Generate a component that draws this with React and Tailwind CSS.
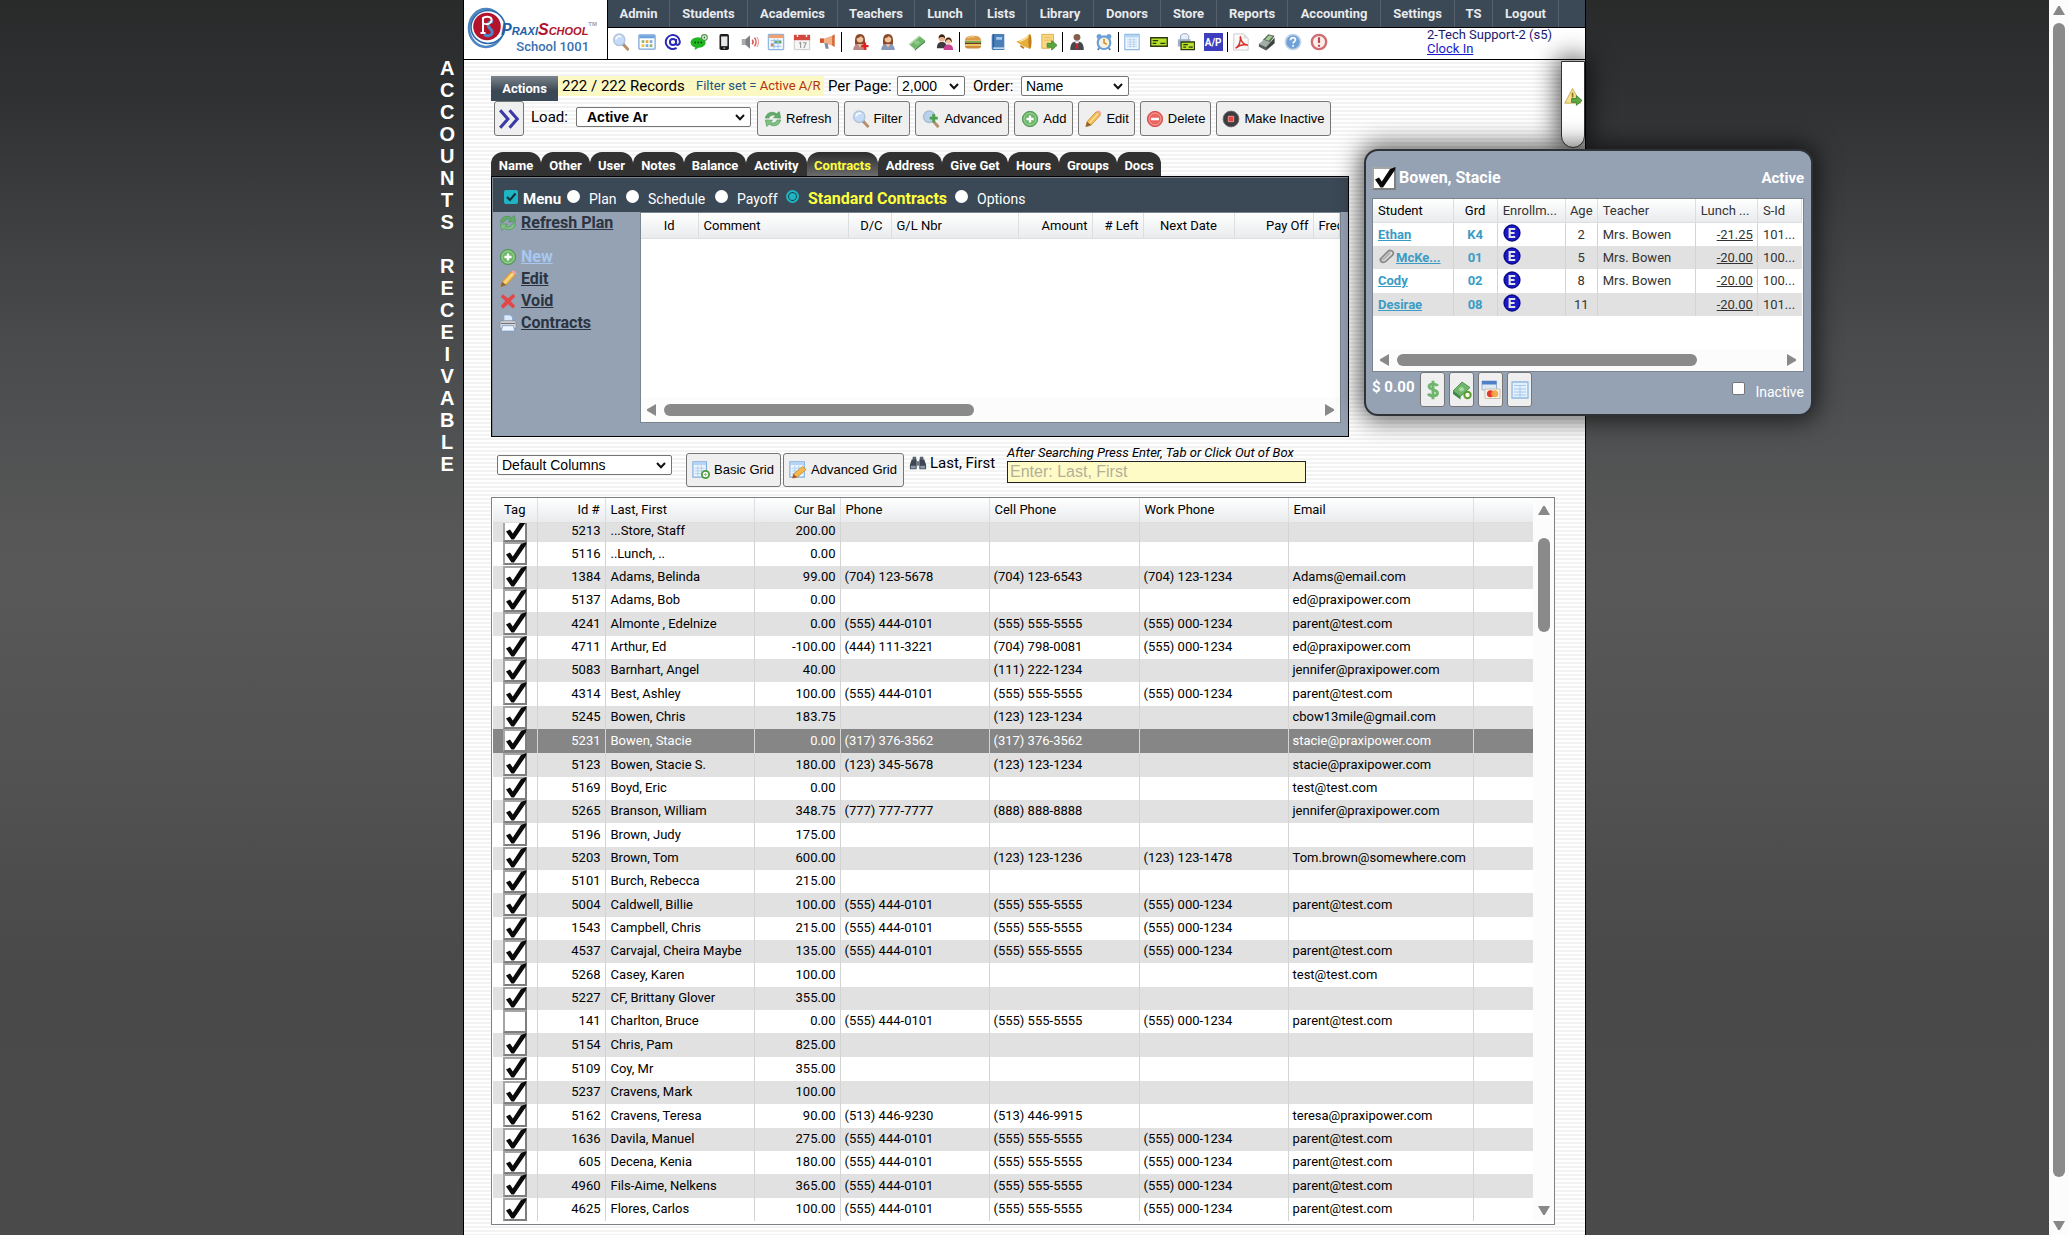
import React from 'react';

/* ---------- icons ---------- */

function Svg({ children, className = 'size-[18px] shrink-0', box = '0 0 20 20' }) {
  return (
    <svg viewBox={box} className={className} fill="none" aria-hidden="true">
      {children}
    </svg>
  );
}

const Lens = ({ className }) => (
  <Svg className={className}>
    <path d="M12 12l5.500 6" stroke="#b98f68" strokeWidth="3.200" strokeLinecap="round" />
    <path d="M12 12l1.500 1.600" stroke="#8a8f96" strokeWidth="3" />
    <circle cx="8" cy="7.500" r="6.300" fill="#c5dcf8" stroke="#b3c4dc" strokeWidth="1.600" />
    <path d="M4.500 6.500a4 4 0 0 1 5-2.600" stroke="#fff" strokeWidth="1.600" strokeLinecap="round" />
  </Svg>
);
const Grid = () => (
  <Svg>
    <rect x="1" y="2" width="18" height="16" rx="1" fill="#fff" stroke="#7aa7d6" strokeWidth="1.400" />
    <path d="M1.500 2.500h17v3.400h-17z" fill="#6fa3dd" />
    <path d="M4 8h3v3H4z" fill="#8fb56b" />
    <path d="M8.500 8h3v3h-3z" fill="#e8a33a" />
    <path d="M13 8h3v3h-3z" fill="#7aa7d6" />
    <path d="M4 12.500h3v3H4z" fill="#e8c33a" />
    <path d="M8.500 12.500h3v3h-3z" fill="#7aa7d6" />
    <path d="M13 12.500h3v3h-3z" fill="#8fb56b" />
  </Svg>
);
const At = () => (
  <Svg>
    <circle cx="10" cy="10" r="3.400" stroke="#2a2ab8" strokeWidth="2.200" />
    <path d="M13.400 6.600v5.200c0 2.200 4.200 2 4.200-2A7.800 7.800 0 1 0 14 16.600" stroke="#2a2ab8" strokeWidth="2.200" />
  </Svg>
);
const Chat = () => (
  <Svg>
    <ellipse cx="9" cy="10.500" rx="8.400" ry="5.800" fill="#22b522" />
    <path d="M6 15l-1 4 5-3z" fill="#22b522" />
    <circle cx="16" cy="5" r="3.200" fill="#e9f7e6" stroke="#4e8f4e" strokeWidth="1.200" />
    <circle cx="16" cy="5" r="1" fill="#2c6b2c" />
    <path d="M5 10.500h1.600M8.400 10.500H10M11.800 10.500h1.600" stroke="#0a3b0a" strokeWidth="1.800" />
  </Svg>
);
const Phone = () => (
  <Svg>
    <rect x="5" y="1" width="10.500" height="18" rx="2" fill="#1a1a1a" />
    <path d="M6.800 3.800h7v10.800h-7z" fill="#e6e9ec" />
    <circle cx="10.300" cy="16.800" r="1" fill="#aaa" />
  </Svg>
);
const Speaker = () => (
  <Svg>
    <path d="M1 7h4l5-4.500v15L5 13H1z" fill="#7d8185" />
    <path d="M1 7h4v6H1z" fill="#a9adb0" />
    <path d="M12.400 7.400a4 4 0 0 1 0 5.200M15 5.400a7 7 0 0 1 0 9.200" stroke="#d7564e" strokeWidth="1.700" />
    <path d="M17.600 4.600a9 9 0 0 1 0 10.800" stroke="#eaa29d" strokeWidth="1.200" />
  </Svg>
);
const Calendar = () => (
  <Svg>
    <rect x="1.500" y="1.500" width="17" height="17" rx="1" fill="#eef5fd" stroke="#8db4de" strokeWidth="1.300" />
    <path d="M2 2h16v3.600H2z" fill="#f0a070" />
    <path d="M4 8.300h12M4 11.600h12M4 14.900h12M7.800 6.500v10.600M12.200 6.500v10.600" stroke="#9cc0e4" />
    <path d="M8.400 8.800h3.300v2.300H8.400z" fill="#58a864" />
    <path d="M12.800 8.800H16v2.300h-3.200z" fill="#58a864" />
    <path d="M4.300 12.100h3v2.300h-3z" fill="#e07c50" />
  </Svg>
);
const Date17 = () => (
  <Svg>
    <path d="M1.500 7h17v11.500h-17z" fill="#f6f6f6" stroke="#c6c6c6" />
    <path d="M1 2h18v6H1z" fill="#d4473c" />
    <path d="M5 .8v3.600M15 .8v3.600" stroke="#eee" strokeWidth="1.600" />
    <path d="M6.800 11.500l1.600-1v6.300M11 10.800h3.400l-2.200 6" stroke="#9a9a9a" strokeWidth="1.300" />
  </Svg>
);
const Megaphone = () => (
  <Svg>
    <path d="M14.500 3l3-1.500v14L14.500 14z" fill="#d46a3a" />
    <path d="M5 6.400L14.500 3v11L5 11z" fill="#f0b088" />
    <path d="M1 6h4.500v5H1z" fill="#d0552c" />
    <path d="M6 11.500h3.600l1.200 6H7.400z" fill="#7f8da3" />
  </Svg>
);
const Woman = ({ plus }) => (
  <Svg>
    <path d="M4.600 13C3.600 4 6 1 10 1s6.400 3 5.400 12z" fill="#8a4b2d" />
    <circle cx="10" cy="7" r="3.600" fill="#f0c49c" />
    <path d="M6.200 6c2-.4 4-1.400 5-2.600 1 1.400 1.800 2.200 2.800 2.600L13 2.600H7z" fill="#8a4b2d" />
    <path d="M2.500 19c0-5 3-6.800 7.500-6.800s7.500 1.800 7.500 6.800z" fill={plus ? '#b98a86' : '#8798b8'} />
    <path d="M7.500 12.400L10 16l2.500-3.600z" fill="#f0c49c" />
    {plus && <path d="M15.500 10.500v8M11.500 14.500h8" stroke="#e02020" strokeWidth="2.600" />}
  </Svg>
);
const Money = () => (
  <Svg>
    <path d="M1 12.400L12.400 3 19 8.400 7.600 18z" fill="#6fb56c" />
    <path d="M1 12.400L12.400 3l1.200 1L2.200 13.400z" fill="#b7dfb1" />
    <path d="M7.600 18L19 8.400v2L7.600 19.600z" fill="#3f8642" />
    <ellipse cx="10" cy="10.600" rx="3" ry="2.400" fill="#8ccb86" />
  </Svg>
);
const People = () => (
  <Svg>
    <path d="M1 17c0-5 2-7 5.500-7s5.500 2 5.500 7z" fill="#3a3a40" />
    <circle cx="6.500" cy="6" r="3.500" fill="#e8b48e" />
    <path d="M2.800 6c0-6 7.400-6 7.400 0-2-2-5-2-7.400 0z" fill="#3b2415" />
    <path d="M8.500 19c0-4.600 2-6.300 5.200-6.300S19 14.400 19 19z" fill="#c93f92" />
    <circle cx="13.800" cy="8.600" r="3.400" fill="#f0c49c" />
    <path d="M10 11c-.6-8 8.400-8 7.600 0-1-2-1.500-3.500-3.800-4-2 .5-3 2-3.800 4z" fill="#4a2410" />
  </Svg>
);
const Burger = () => (
  <Svg>
    <path d="M1 8.500C1 4.500 5 3 10 3s9 1.500 9 5.500z" fill="#dc9c46" />
    <path d="M4 5.600c2-1.300 5-1.600 8-1.300" stroke="#f3cf8f" strokeWidth="1.200" />
    <path d="M.8 9h18.400v1.700H.8z" fill="#6aa83a" />
    <path d="M1 10.700h18v2H1z" fill="#6b3a1c" />
    <path d="M1.200 12.300h17.600l-3 1.600-2-1-3 1.400-3-1.400-3 1z" fill="#f5cf3c" />
    <path d="M1 14h18c0 2.400-1.500 3.300-3 3.300H4c-1.500 0-3-.9-3-3.300z" fill="#cf8c38" />
  </Svg>
);
const Book = () => (
  <Svg>
    <path d="M3 3a2 2 0 0 1 2-2h12v18H5a2 2 0 0 1-2-2z" fill="#4a7fb8" />
    <path d="M5 1v18" stroke="#2f5d92" strokeWidth="1.400" />
    <path d="M8 4.500h6.500v3H8z" fill="#a9cbec" />
    <path d="M4.500 16.800H17" stroke="#dce9f6" strokeWidth="1.500" />
  </Svg>
);
const Bell = () => (
  <Svg>
    <path d="M1.500 9.500C8 8 12 5 16 1.200c2 3 2.800 11 .6 16.600-4-1.800-9.600-3.600-15.100-8.300z" fill="#e8ae3c" />
    <path d="M5 9.500c4-1 7-3.200 10-6" stroke="#fbe3a0" strokeWidth="1.600" />
    <ellipse cx="16.600" cy="9.500" rx="1.800" ry="8" fill="#c07f1c" />
    <path d="M6 14l4 3" stroke="#b87a20" strokeWidth="2" />
  </Svg>
);
const NoteOut = () => (
  <Svg>
    <path d="M2 1.500h13v12L11 17H2z" fill="#f8d882" stroke="#dcae4a" />
    <path d="M4.500 5h8M4.500 8h8" stroke="#e6bd62" />
    <path d="M8 11.500h5V8.400l6 5.300-6 5.300v-3.200H8z" fill="#57a844" stroke="#2f7a26" strokeWidth=".8" />
  </Svg>
);
const Suit = () => (
  <Svg>
    <circle cx="10" cy="4.800" r="3.800" fill="#84604c" />
    <path d="M2.500 19c0-7 2-9.600 7.500-9.600s7.500 2.600 7.500 9.600z" fill="#46464c" />
    <path d="M7.500 9.500L10 14l2.500-4.500z" fill="#fff" />
    <path d="M9.200 11h1.600l.8 5.500L10 18.500l-1.600-2z" fill="#c8242c" />
  </Svg>
);
const Alarm = () => (
  <Svg>
    <circle cx="4.600" cy="4" r="2.800" fill="#6e9fd6" />
    <circle cx="15.400" cy="4" r="2.800" fill="#6e9fd6" />
    <path d="M5 16l-2 3M15 16l2 3" stroke="#5c88bd" strokeWidth="2" />
    <circle cx="10" cy="10.800" r="7" fill="#f6f3e0" stroke="#6e9fd6" strokeWidth="2.400" />
    <path d="M10 6.500v4.500l3 1.500" stroke="#d48a1c" strokeWidth="1.700" />
  </Svg>
);
const Sheet = ({ className }) => (
  <Svg className={className}>
    <path d="M2 1.500h16v17H2z" fill="#f3f9ff" stroke="#8fb9e2" strokeWidth="1.300" />
    <path d="M2.600 2h14.800v3H2.600z" fill="#b5d4f3" />
    <path d="M4.500 7.500h11M4.500 10h11M4.500 12.500h11M4.500 15h11M8 5.500v11M12 5.500v11" stroke="#b2d0ee" />
  </Svg>
);
const Check = () => (
  <Svg>
    <path d="M.8 5.300h18.400v9.400H.8z" fill="#b6e02c" stroke="#2f3a10" strokeWidth="1.500" />
    <path d="M3 8.600h6M3 11.600h4M11.500 11.600h5.500" stroke="#2f3a10" strokeWidth="1.400" />
  </Svg>
);
const CheckPrint = () => (
  <Svg>
    <path d="M4 8V2.500l3-1.700h4l2 2V8z" fill="#e9eff8" stroke="#8fa3c0" />
    <path d="M1 7h14v8H1z" fill="#9fb0cc" />
    <path d="M4.500 10h15v8.500h-15z" fill="#b6e02c" stroke="#2f3a10" strokeWidth="1.400" />
    <path d="M7 13h5M7 15.600h3M13 15.600h4.500" stroke="#2f3a10" strokeWidth="1.300" />
  </Svg>
);
const Pdf = () => (
  <Svg>
    <path d="M2 1h11l5 5v13H2z" fill="#fafafa" stroke="#c9c9c9" />
    <path d="M13 1v5h5z" fill="#dcdcdc" />
    <path d="M4.500 16.500c3-2 5.500-7 4.800-12.300C10 9.500 12.500 12.500 17 13.400 12 12.500 8 13.500 4.500 16.500z" stroke="#d8322a" strokeWidth="1.700" strokeLinejoin="round" />
  </Svg>
);
const Register = () => (
  <Svg>
    <path d="M5 8l6.500-6.500 7 1.500L13 11z" fill="#5e6a62" />
    <path d="M8 7.200L12.200 2.800l4 .9-4.400 4.900z" fill="#9fd08c" />
    <path d="M1 12l5.500-4.500L14 10.500 9 15.500z" fill="#a3aca5" />
    <path d="M1 12l8 3.500v3.900l-8-4z" fill="#56605a" />
    <path d="M9 15.500L18.500 5v6.500L9 19.400z" fill="#3c4540" />
  </Svg>
);
const Help = () => (
  <Svg>
    <circle cx="10" cy="10" r="8.400" fill="#6fa1d8" stroke="#c4d5e8" strokeWidth="1.800" />
    <path d="M7.200 8c0-3.600 5.600-3.600 5.600-.4 0 2-2.700 2.100-2.700 4.200M10.100 13.400v2" stroke="#fff" strokeWidth="1.900" />
  </Svg>
);
const Alert = () => (
  <Svg>
    <circle cx="10" cy="10" r="8" fill="#fbeeee" stroke="#cf6e70" strokeWidth="2.600" />
    <path d="M10 4.800v6.400M10 13v2.400" stroke="#c24a4e" strokeWidth="2.400" />
  </Svg>
);
const Refresh = ({ className }) => (
  <Svg className={className}>
    <path d="M1.500 9C2.500 3 9 .5 14 4.200L17 1.800 18.500 9l-8-.4 2.400-2.200C10.500 5 6.500 5.400 5.400 9z" fill="#63ad6a" stroke="#3f8a4a" strokeWidth=".6" />
    <path d="M18.500 11c-1 6-7.500 8.500-12.500 4.800L3 18.200 1.500 11l8 .4-2.400 2.200c2.400 1.400 6.400 1 7.500-2.600z" fill="#7fc283" stroke="#3f8a4a" strokeWidth=".6" />
  </Svg>
);
const LensPlus = ({ className }) => (
  <Svg className={className}>
    <path d="M12 12l5.500 6" stroke="#b98f68" strokeWidth="3.200" strokeLinecap="round" />
    <circle cx="8" cy="7.500" r="6.300" fill="#b9d3ec" stroke="#a9bcd4" strokeWidth="1.600" />
    <path d="M13 4.500v9M8.500 9h9" stroke="#4c9f4a" strokeWidth="3.200" />
  </Svg>
);
const Plus = ({ className }) => (
  <Svg className={className}>
    <circle cx="10" cy="10" r="8.500" fill="#6cb66a" stroke="#4c9250" />
    <circle cx="10" cy="10" r="6.600" stroke="#a6d8a0" />
    <path d="M10 6v8M6 10h8" stroke="#fff" strokeWidth="2.600" />
  </Svg>
);
const Pencil = ({ className }) => (
  <Svg className={className}>
    <path d="M2 18.500l1.400-5.500L13.500 2l4.700 3.600L8 16.800z" fill="#f4bd55" stroke="#c78a2c" strokeWidth=".9" />
    <path d="M13.500 2l1.300-1.200c1.800-.6 4 1.200 4.200 2.800l-.8 2z" fill="#f0a49a" />
    <path d="M5.600 14.800L15.800 3.800" stroke="#fde4a4" strokeWidth="1.400" />
    <path d="M2 18.500l1.400-5.500 4.600 3.800z" fill="#8a6238" />
  </Svg>
);
const Minus = ({ className }) => (
  <Svg className={className}>
    <circle cx="10" cy="10" r="8.500" fill="#ea6460" stroke="#c94744" />
    <circle cx="10" cy="10" r="6.600" stroke="#f6a6a2" />
    <path d="M5.600 10h8.800" stroke="#fff" strokeWidth="2.800" />
  </Svg>
);
const Stop = ({ className }) => (
  <Svg className={className}>
    <circle cx="10" cy="10" r="8.800" fill="#3d3d3f" stroke="#6a6a6c" />
    <path d="M7 7h6v6H7z" fill="#e8403c" stroke="#f2a09c" />
  </Svg>
);
const Chevrons = () => (
  <Svg className="size-[22px]">
    <path d="M2 2l7 8-7 8M10.500 2l7 8-7 8" stroke="#3b3aa6" strokeWidth="2.800" />
  </Svg>
);
const Cross = ({ className }) => (
  <Svg className={className}>
    <path d="M4 2.500L10 7l6-5 2 3-5 5.200 5 5-2.500 3L10 13.500 4.500 18.500 2 15.500 7 10 2 5.500z" fill="#e2484a" />
  </Svg>
);
const Printer = ({ className }) => (
  <Svg className={className}>
    <path d="M5.500 8V1h7l2.500 2.500V8z" fill="#dce9fa" stroke="#86a7d4" />
    <path d="M1 9.500L3 7.500h14l2 2V16H1z" fill="#d2d5da" stroke="#82878f" strokeWidth=".8" />
    <path d="M2 10.500h16" stroke="#7b6f7a" strokeWidth="1.200" />
    <path d="M4 13h12l1.500 6h-15z" fill="#eef5ff" stroke="#7f9fca" />
  </Svg>
);
const GridPlus = () => (
  <Svg>
    <path d="M1 1h15v17H1z" fill="#eef6ff" stroke="#7fb0e0" strokeWidth="1.300" />
    <path d="M1.500 1.500h14v3h-14z" fill="#b5d4f3" />
    <path d="M3 8h11M3 11h11M3 14h11M6.500 5v12M10.500 5v12" stroke="#a9cbec" />
    <circle cx="15" cy="15" r="4" fill="#fff" stroke="#4f9a3e" strokeWidth="2" />
    <path d="M15 13v4M13 15h4" stroke="#8cc47c" strokeWidth="1.200" />
  </Svg>
);
const GridPencil = () => (
  <Svg>
    <path d="M1 1h16v17H1z" fill="#eef6ff" stroke="#7fb0e0" strokeWidth="1.300" />
    <path d="M1.500 1.500h15v3h-15z" fill="#b5d4f3" />
    <path d="M3 8h12M3 11h12M3 14h12M6.500 5v12M11 5v12" stroke="#a9cbec" />
    <path d="M4 19l1-4.500L15 6l4 3.500L9 18z" fill="#f4b84c" stroke="#b9812c" strokeWidth=".8" />
    <path d="M4 19l1-4.500L9 18z" fill="#a3502c" />
  </Svg>
);
const Binoculars = () => (
  <Svg>
    <path d="M4 3h4v4H4zM12 3h4v4h-4z" fill="#59636e" />
    <path d="M3 6h5.500v11H1v-5zM17 6h-5.500v11H19v-5z" fill="#3d4852" />
    <path d="M8 8h4v5H8z" fill="#6a7580" />
    <path d="M2 13h5.500v3H2zM12.500 13H18v3h-5.500z" fill="#8c99a6" />
  </Svg>
);
const WarnOut = () => (
  <Svg className="size-[19px] shrink-0">
    <path d="M9 1.500L17.500 17H.8z" fill="#f7e08e" stroke="#c9ae5c" strokeLinejoin="round" />
    <path d="M9 6v5" stroke="#8a742c" strokeWidth="1.800" />
    <path d="M8 12.200h5V9l6 5.200-6 5.200v-3.200H8z" fill="#5aa846" stroke="#2f7a26" strokeWidth=".8" />
  </Svg>
);
const Clip = () => (
  <Svg className="mb-1 size-[18px] shrink-0">
    <path d="M2.600 13.500L11 5c2-2 5-1 5.800.6.600 1.200.2 2.400-.8 3.400L8.600 16c-1.600 1.400-4.600 1.400-5.600-.4-.5-1-.2-1.500.6-2.300" stroke="#8a8a8a" strokeWidth="2" strokeLinecap="round" />
    <path d="M6 13.800l7-6.800" stroke="#b4b4b4" strokeWidth="2.400" strokeLinecap="round" />
  </Svg>
);
const Dollar = () => (
  <Svg className="size-[20px]">
    <path d="M14.500 6C13.500 3.600 6 3.200 6 6.600c0 3.600 8.500 2.400 8.500 6.400 0 3.800-8 3.600-9.200.6M10 .8v18.400" stroke="#6fb56c" strokeWidth="2.900" />
  </Svg>
);
const MoneyPlus = () => (
  <Svg className="size-[20px]">
    <path d="M1 11L10 2l8 5.500-9.500 9z" fill="#6fb56c" stroke="#43883f" strokeWidth=".8" />
    <path d="M1 11v3l7.500 5.500v-3z" fill="#3f8642" />
    <ellipse cx="9.500" cy="9.300" rx="2.600" ry="2.200" fill="#a5d69d" />
    <circle cx="15.500" cy="15" r="3.200" fill="#f3fbe9" stroke="#5d9c2e" strokeWidth="2" />
  </Svg>
);
const Cards = () => (
  <Svg className="size-[20px]">
    <path d="M1 1h14.500v9H1z" fill="#dfe9f6" stroke="#9cb4d4" />
    <path d="M1 1h14.500v3.500H1z" fill="#4f7fc8" />
    <path d="M4 9h15v9.500H4z" fill="#f6f3ee" stroke="#cbbfae" />
    <circle cx="9.400" cy="13.700" r="3.500" fill="#e2382c" />
    <circle cx="13.800" cy="13.700" r="3.500" fill="#f2a33a" fillOpacity=".9" />
  </Svg>
);
const Ledger = () => (
  <Svg className="size-[20px]">
    <path d="M2 2h16v16H2z" fill="#e4f0fd" stroke="#8fb9e2" strokeWidth="1.300" />
    <path d="M4 5.500h12M4 9h12M4 12h12M4 15h12M10 5.500V17" stroke="#a6c9ec" />
  </Svg>
);
const EBadge = () => (
  <Svg className="mb-[3px] size-[18px]">
    <circle cx="10" cy="10" r="9.600" fill="#0c0c8c" />
    <circle cx="10" cy="10" r="8" fill="#1a1ac8" />
    <path d="M13.600 5.600H7.400v8.800h6.200M7.400 10h5.400" stroke="#e4e4e4" strokeWidth="2.400" />
  </Svg>
);

const DOWN = 'M0 0h12L6.800 9h-1.600z';
const UP = 'M5.200 0h1.600L12 9H0z';
const LEFT = 'M9 0v12L0 6.800V5.200z';
const RIGHT = 'M0 0l9 5.200v1.600L0 12z';
const Arrow = ({ d, wide }) => (
  <svg viewBox={wide ? '0 0 12 9' : '0 0 9 12'} className={wide ? 'h-[9px] w-3 shrink-0' : 'h-3 w-[9px] shrink-0'} aria-hidden="true">
    <path d={d} fill="#888" />
  </svg>
);

/* ---------- small controls ---------- */

function Tag({ label, checked }) {
  return (
    <label className="grid h-[23px] w-6">
      <input type="checkbox" aria-label={label} defaultChecked={checked} className="peer col-start-1 row-start-1 appearance-none border-2 border-[#a6a6a6] border-r-[#7e7e7e] border-b-[#7e7e7e] bg-white" />
      <svg viewBox="0 0 24 23" className="pointer-events-none invisible col-start-1 row-start-1 peer-checked:visible" aria-hidden="true">
        <path d="M3 12.500l4-2 2.800 4L18 2 23.500 0l-.5 3L11 20.500H8.500z" fill="#0a0a0a" />
      </svg>
    </label>
  );
}

function Select({ label, options, box, className }) {
  return (
    <span className={'grid h-5 ' + box}>
      <select aria-label={label} className={'col-start-1 row-start-1 w-full appearance-none rounded-[2px] border border-[#767676] bg-white font-[Liberation_Sans,sans-serif] leading-4 text-black ' + className}>
        {options.map((o) => (
          <option key={o}>{o}</option>
        ))}
      </select>
      <svg viewBox="0 0 10 7" className="pointer-events-none col-start-1 row-start-1 mr-1.5 h-[7px] w-2.5 self-center justify-self-end" fill="none" aria-hidden="true">
        <path d="M1 1l4 4.200L9 1" stroke="#111" strokeWidth="2" />
      </svg>
    </span>
  );
}

function Push({ icon: Icon, children, className = 'px-[5px]' }) {
  return (
    <button type="button" className={'flex items-center gap-1 rounded-[3px] border border-[#767676] bg-[#efefef] font-[Liberation_Sans,sans-serif] text-[13px] whitespace-nowrap text-black ' + className}>
      <Icon />
      {children}
    </button>
  );
}

/* ---------- data ---------- */

const NAV = [
  ['Admin', 'w-[62px]'], ['Students', 'w-[78px]'], ['Academics', 'w-[90px]'], ['Teachers', 'w-[77px]'],
  ['Lunch', 'w-[61px]'], ['Lists', 'w-[51px]'], ['Library', 'w-[67px]'], ['Donors', 'w-[67px]'],
  ['Store', 'w-[56px]'], ['Reports', 'w-[71px]'], ['Accounting', 'w-[93px]'], ['Settings', 'w-[74px]'],
  ['TS', 'w-[38px]'], ['Logout', 'w-[66px]'],
];

const Ap = () => (
  <span className="flex h-[18px] w-[19px] items-center justify-center bg-[#3d3dc0] text-[10px] font-bold text-white">A/P</span>
);
const WomanPlus = () => <Woman plus />;
const TOOLS = [
  ['w-[234px]', [['Search', Lens], ['Grid', Grid], ['Email', At], ['Chat', Chat], ['Text', Phone], ['Voice', Speaker], ['Schedule', Calendar], ['Calendar', Date17], ['Announce', Megaphone]]],
  ['w-[118px] pl-1', [['Add parent', WomanPlus], ['Parent', Woman], ['Payments', Money], ['Families', People]]],
  ['w-[103px]', [['Lunch', Burger], ['Library', Book], ['Bell', Bell], ['Post note', NoteOut]]],
  ['w-[56px]', [['Staff', Suit], ['Clock', Alarm]]],
  ['w-[109px]', [['Ledger', Sheet], ['Check', Check], ['Print checks', CheckPrint], ['Payable', Ap]]],
  ['w-[104px]', [['PDF', Pdf], ['Register', Register], ['Help', Help], ['Alert', Alert]]],
];

const TABS = [
  ['Name', 'w-[50px]'], ['Other', 'w-[49px]'], ['User', 'w-[43px]'], ['Notes', 'w-[51px]'], ['Balance', 'w-[62px]'],
  ['Activity', 'w-[61px]'], ['Contracts', 'w-[71px]'], ['Address', 'w-[64px]'], ['Give Get', 'w-[66px]'],
  ['Hours', 'w-[51px]'], ['Groups', 'w-[58px]'], ['Docs', 'w-[44px]'],
];

const P = '(555) 444-0101';
const C = '(555) 555-5555';
const W = '(555) 000-1234';
const E = 'parent@test.com';
const ROWS = [
  ['5213', '...Store, Staff', '200.00', '', '', '', ''],
  ['5116', '..Lunch, ..', '0.00', '', '', '', ''],
  ['1384', 'Adams, Belinda', '99.00', '(704) 123-5678', '(704) 123-6543', '(704) 123-1234', 'Adams@email.com'],
  ['5137', 'Adams, Bob', '0.00', '', '', '', 'ed@praxipower.com'],
  ['4241', 'Almonte , Edelnize', '0.00', P, C, W, E],
  ['4711', 'Arthur, Ed', '-100.00', '(444) 111-3221', '(704) 798-0081', W, 'ed@praxipower.com'],
  ['5083', 'Barnhart, Angel', '40.00', '', '(111) 222-1234', '', 'jennifer@praxipower.com'],
  ['4314', 'Best, Ashley', '100.00', P, C, W, E],
  ['5245', 'Bowen, Chris', '183.75', '', '(123) 123-1234', '', 'cbow13mile@gmail.com'],
  ['5231', 'Bowen, Stacie', '0.00', '(317) 376-3562', '(317) 376-3562', '', 'stacie@praxipower.com'],
  ['5123', 'Bowen, Stacie S.', '180.00', '(123) 345-5678', '(123) 123-1234', '', 'stacie@praxipower.com'],
  ['5169', 'Boyd, Eric', '0.00', '', '', '', 'test@test.com'],
  ['5265', 'Branson, William', '348.75', '(777) 777-7777', '(888) 888-8888', '', 'jennifer@praxipower.com'],
  ['5196', 'Brown, Judy', '175.00', '', '', '', ''],
  ['5203', 'Brown, Tom', '600.00', '', '(123) 123-1236', '(123) 123-1478', 'Tom.brown@somewhere.com'],
  ['5101', 'Burch, Rebecca', '215.00', '', '', '', ''],
  ['5004', 'Caldwell, Billie', '100.00', P, C, W, E],
  ['1543', 'Campbell, Chris', '215.00', P, C, W, ''],
  ['4537', 'Carvajal, Cheira Maybe', '135.00', P, C, W, E],
  ['5268', 'Casey, Karen', '100.00', '', '', '', 'test@test.com'],
  ['5227', 'CF, Brittany Glover', '355.00', '', '', '', ''],
  ['141', 'Charlton, Bruce', '0.00', P, C, W, E],
  ['5154', 'Chris, Pam', '825.00', '', '', '', ''],
  ['5109', 'Coy, Mr', '355.00', '', '', '', ''],
  ['5237', 'Cravens, Mark', '100.00', '', '', '', ''],
  ['5162', 'Cravens, Teresa', '90.00', '(513) 446-9230', '(513) 446-9915', '', 'teresa@praxipower.com'],
  ['1636', 'Davila, Manuel', '275.00', P, C, W, E],
  ['605', 'Decena, Kenia', '180.00', P, C, W, E],
  ['4960', 'Fils-Aime, Nelkens', '365.00', P, C, W, E],
  ['4625', 'Flores, Carlos', '100.00', P, C, W, E],
];

const STUDENTS = [
  ['Ethan', 'K4', '2', 'Mrs. Bowen', '-21.25', '101...'],
  ['McKe...', '01', '5', 'Mrs. Bowen', '-20.00', '100...'],
  ['Cody', '02', '8', 'Mrs. Bowen', '-20.00', '100...'],
  ['Desirae', '08', '11', '', '-20.00', '101...'],
];

/* ---------- header ---------- */

function Logo() {
  return (
    <a href="#home" className="flex w-36 shrink-0 border-r border-black bg-white pt-[7px] pl-[3px]">
      <svg viewBox="0 0 40 42" className="h-[42px] w-10 shrink-0" fill="none" aria-hidden="true">
        <ellipse cx="19" cy="21" rx="17" ry="19" stroke="#4d86c2" strokeWidth="2.600" />
        <ellipse cx="21" cy="20" rx="17" ry="16.500" fill="#fff" stroke="#2d68ae" strokeWidth="1.600" />
        <circle cx="20" cy="19.500" r="13.800" fill="#b3142c" />
        <path d="M26 15c-3.500-1-6 1.500-4.500 4.500s5 3.500 3.500 7c-1.200 2.600-5 3-8 1" stroke="#4d86c2" strokeWidth="3" />
        <path d="M16 26V11c5-2.600 9.500-.6 8.500 3-1 2.800-4.500 3.600-7.500 2.600M13.500 26h5" stroke="#fff" strokeWidth="2" />
      </svg>
      <span className="-ml-1.5 flex flex-col items-end">
        <span className="mt-3.5 flex items-start font-[Liberation_Sans,sans-serif] text-[16px] leading-[18px] font-bold text-[#1f5ea8] italic [font-variant:small-caps]">
          Praxi<span className="text-[#b3142c]">School</span>
          <span className="text-[6px] leading-[6px] text-gray-400 not-italic">TM</span>
        </span>
        <span className="pr-2 text-[13px] leading-4 font-medium text-[#3a70b0]">School 1001</span>
      </span>
    </a>
  );
}

function Header() {
  return (
    <header className="flex h-[60px] border-b border-black">
      <Logo />
      <div className="flex min-w-0 flex-1 flex-col">
        <nav className="flex h-7 border-b border-black bg-[#3b4855]">
          {NAV.map(([t, w]) => (
            <a key={t} href={'#' + t} className={'flex items-center justify-center border-r border-[#56616c] text-[13px] font-bold text-[#e8eaec] ' + w}>
              {t}
            </a>
          ))}
        </nav>
        <div className="flex h-[31px] items-center bg-white pb-[3px]">
          {TOOLS.map(([w, tools], i) => (
            <div key={w} className={'flex h-5 shrink-0 justify-around ' + w + (i < 5 ? ' border-r border-black' : '')}>
              {tools.map(([t, Icon]) => (
                <button key={t} type="button" aria-label={t} className="flex items-center">
                  <Icon />
                </button>
              ))}
            </div>
          ))}
          <div className="ml-[95px] text-[13px] leading-[14px] whitespace-nowrap text-[#191970]">
            <div>2-Tech Support-2 (s5)</div>
            <a href="#clock" className="text-[#1a1acd] underline">Clock In</a>
          </div>
        </div>
      </div>
    </header>
  );
}

/* ---------- filters and actions ---------- */

function Filters() {
  return (
    <section>
      <div className="flex h-[25px] items-start text-black">
        <button type="button" className="h-[25px] w-[67px] bg-linear-to-b from-[#7d858c] to-[#3b4855] to-60% text-[13px] font-bold text-white">Actions</button>
        <div className="flex h-5 w-[266px] items-center bg-[#fbf8c4] pl-1 whitespace-nowrap">
          <span className="w-[134px] text-[15px]">222 / 222 Records</span>
          <span className="text-[13px] text-[#24527a]">
            Filter set = <span className="text-[#b5330c]">Active A/R</span>
          </span>
        </div>
        <span className="w-[73px] pl-1 text-[15px] leading-5">Per Page:</span>
        <Select label="Per Page" options={['2,000']} box="w-[68px]" className="pl-1 text-[14px]" />
        <span className="w-[56px] pl-2 text-[15px] leading-5">Order:</span>
        <Select label="Order" options={['Name']} box="w-[108px]" className="pl-1 text-[14px]" />
      </div>
      <div className="ml-[3px] flex h-[35px] gap-[5px]">
        <button type="button" aria-label="Expand" className="flex w-[30px] items-center justify-center rounded-[3px] border border-[#767676] bg-[#efefef]">
          <Chevrons />
        </button>
        <div className="flex w-[223px] gap-[7px] pt-[6px] pl-[2px]">
          <span className="w-[38px] text-[15px] leading-5">Load:</span>
          <Select label="Load" options={['Active Ar']} box="w-[175px]" className="pl-2.5 text-[14px] font-bold" />
        </div>
        <Push icon={Refresh} className="px-1.5">Refresh</Push>
        <Push icon={Lens} className="px-[7px]">Filter</Push>
        <Push icon={LensPlus} className="px-1.5">Advanced</Push>
        <Push icon={Plus} className="px-1.5">Add</Push>
        <Push icon={Pencil}>Edit</Push>
        <Push icon={Minus}>Delete</Push>
        <Push icon={Stop}>Make Inactive</Push>
      </div>
    </section>
  );
}

/* ---------- contracts panel ---------- */

const RADIOS = [['Plan', 'w-[59px]'], ['Schedule', 'w-[89px]'], ['Payoff', 'w-[71px]'], ['Standard Contracts', 'w-[169px]'], ['Options', '']];
const PLAN_COLS = [
  ['Id', 'w-[57px] text-center'], ['Comment', 'w-[150px] pl-[5px] text-left'], ['D/C', 'w-[43px] pr-2 text-right'], ['G/L Nbr', 'w-[127px] pl-[5px] text-left'],
  ['Amount', 'w-[74px] pr-1 text-right'], ['# Left', 'w-[51px] pr-1 text-right'], ['Next Date', 'w-[91px] text-center'],
  ['Pay Off', 'w-[79px] pr-1 text-right'], ['Freq', 'pl-[5px] text-left'],
];
const LINKS = [['New', Plus, 'text-[#a6c8f2]'], ['Edit', Pencil, 'text-[#2b3440]'], ['Void', Cross, 'text-[#2b3440]'], ['Contracts', Printer, 'text-[#2b3440]']];

function Contracts() {
  return (
    <section className="mt-4 w-[858px]">
      <div className="flex h-6" role="tablist">
        {TABS.map(([t, w]) => (
          <button
            key={t}
            type="button"
            role="tab"
            aria-selected={t === 'Contracts'}
            className={'rounded-t-xl pt-1 text-[13px] font-bold whitespace-nowrap ' + w + (t === 'Contracts' ? ' bg-linear-to-b from-[#2c2c2c] to-[#6c6c6c] text-[#ffff3c]' : ' bg-[#323232] text-white')}
          >
            {t}
          </button>
        ))}
      </div>
      <div className="border border-black bg-[#95a2b4]">
        <div className="flex h-[35px] items-center border-t border-l border-t-[#7b858e] border-l-[#7b858e] bg-[#3b4855] pt-2 pl-[11px] text-[14px] text-white">
          <label className="flex w-[63px] items-center gap-[5px] text-[15px] font-bold">
            <span className="mb-[5px] grid size-[14px]">
              <input type="checkbox" defaultChecked className="col-start-1 row-start-1 appearance-none rounded-[2px] bg-[#1eb4c2]" />
              <svg viewBox="0 0 14 14" className="pointer-events-none col-start-1 row-start-1" fill="none" aria-hidden="true">
                <path d="M3 7l3 3 5.500-6.500" stroke="#14303a" strokeWidth="2" />
              </svg>
            </span>
            Menu
          </label>
          {RADIOS.map(([t, w], i) => (
            <label key={t} className={'flex items-center gap-[9px] whitespace-nowrap ' + w + (i === 3 ? ' text-[16px] font-bold text-[#ffff3c]' : '')}>
              <input
                type="radio"
                name="view"
                defaultChecked={i === 3}
                className="mb-[5px] size-[13px] shrink-0 appearance-none rounded-full bg-white checked:border-2 checked:border-[#1eb4c2] checked:bg-[#1eb4c2] checked:shadow-[inset_0_0_0_1px_#22343f]"
              />
              {t}
            </label>
          ))}
        </div>
        <div className="flex border-l border-[#7b858e] pb-[13px]">
          <ul className="w-[147px] pl-[6px] text-[16px] leading-[22px] font-bold">
            <li className="mb-3 flex items-center gap-1">
              <Refresh className="size-[18px]" />
              <a href="#refresh" className="text-[#2b3440] underline">Refresh Plan</a>
            </li>
            {LINKS.map(([t, Icon, color]) => (
              <li key={t} className="flex items-center gap-1">
                <Icon className="size-[18px]" />
                <a href={'#' + t} className={'underline ' + color}>{t}</a>
              </li>
            ))}
          </ul>
          <div className="flex h-[211px] w-[701px] flex-col justify-between overflow-hidden border border-[#7b858e] bg-white">
            <table className="w-full table-fixed border-collapse text-[13px]">
              <thead>
                <tr className="h-[25px] bg-linear-to-b from-white to-[#e9ebed]">
                  {PLAN_COLS.map(([t, c]) => (
                    <th key={t} className={'overflow-hidden border-r border-b border-[#dcdee0] p-0 font-normal ' + c}>{t}</th>
                  ))}
                </tr>
              </thead>
            </table>
            <div className="flex h-6 items-center bg-[#fcfcfc] px-[6px]">
              <Arrow d={LEFT} />
              <div className="ml-2 h-3 w-[310px] rounded-full bg-[#8a8a8a]" />
              <div className="flex-1" />
              <Arrow d={RIGHT} />
            </div>
          </div>
        </div>
      </div>
    </section>
  );
}

/* ---------- search row ---------- */

function GridBar() {
  return (
    <section className="mt-4 flex h-[34px] items-start pl-[6px]">
      <Select label="Columns" options={['Default Columns']} box="w-[175px] mt-[2px]" className="pl-1 text-[14px]" />
      <div className="ml-[14px] flex h-[34px] gap-[2px]">
        <Push icon={GridPlus} className="w-[95px] px-[5px]">Basic Grid</Push>
        <Push icon={GridPencil} className="w-[121px] px-[5px]">Advanced Grid</Push>
      </div>
      <label htmlFor="find" className="ml-[5px] flex w-[98px] items-center gap-[3px] text-[15px] leading-5 whitespace-nowrap">
        <Binoculars />
        Last, First
      </label>
      <div className="-mt-2 flex w-[299px] flex-col">
        <span className="text-[13px] leading-4 whitespace-nowrap text-black italic">After Searching Press Enter, Tab or Click Out of Box</span>
        <input id="find" type="text" placeholder="Enter: Last, First" className="h-[22px] border border-[#222] bg-[#fffbc6] px-[2px] font-[Liberation_Sans,sans-serif] text-[16px] placeholder:text-[#b3b09a]" />
      </div>
    </section>
  );
}

/* ---------- accounts table ---------- */

const HEAD = [
  ['Tag', 'w-[44px] text-center'], ['Id #', 'w-[68px] text-right pr-[5px]'], ['Last, First', 'w-[149px] pl-[5px] text-left'],
  ['Cur Bal', 'w-[86px] text-right pr-1'], ['Phone', 'w-[149px] pl-[5px] text-left'], ['Cell Phone', 'w-[150px] pl-[5px] text-left'],
  ['Work Phone', 'w-[149px] pl-[5px] text-left'], ['Email', 'w-[185px] pl-[5px] text-left'], ['', 'text-left'],
];
const ALIGN = ['text-right pr-1', 'pl-[5px]', 'text-right pr-1', 'pl-1', 'pl-1', 'pl-1', 'pl-1'];

function rowTone(i) {
  if (i === 9) return 'bg-[#868686] text-white';
  return i % 2 ? 'bg-white text-black' : 'bg-[#e1e1e1] text-black';
}

function Accounts() {
  return (
    <section className="mt-[10px] mr-[30px] flex border border-[#7c8186] bg-white pb-[3px] pl-px">
      <table className="min-w-0 flex-1 table-fixed border-collapse text-[13px] leading-[18px] whitespace-nowrap">
        <thead>
          <tr className="h-6 bg-linear-to-b from-white to-[#e9ebed]">
            {HEAD.map(([t, c]) => (
              <th key={c} className={'border-r border-b border-[#dcdee0] p-0 font-normal last:border-r-0 ' + c}>{t}</th>
            ))}
          </tr>
        </thead>
        <tbody>
          {ROWS.map((row, i) => (
            <tr key={row[0]} className={rowTone(i) + (i === 0 ? ' h-[19px] align-top leading-4' : ' h-[23px] nth-[3n+2]:h-6 nth-[14n+10]:h-6')}>
              <td className="border-r border-[#d4d4d4] p-0">
                <div className={'flex items-end justify-center overflow-hidden ' + (i === 0 ? 'h-[19px]' : 'h-[23px]')}>
                  <Tag label={'Tag ' + row[1]} checked={row[0] !== '141'} />
                </div>
              </td>
              {row.map((v, j) => (
                <td key={j} className={'border-r border-[#d4d4d4] p-0 ' + ALIGN[j]}>{v}</td>
              ))}
              <td className="p-0" />
            </tr>
          ))}
        </tbody>
      </table>
      <div className="flex w-[21px] flex-col items-center bg-[#fcfcfc] pt-2 pb-[6px]">
        <Arrow d={UP} wide />
        <div className="mt-[23px] h-[94px] w-3 rounded-full bg-[#8a8a8a]" />
        <div className="flex-1" />
        <Arrow d={DOWN} wide />
      </div>
    </section>
  );
}

/* ---------- floating family card ---------- */

const CARD_HEAD = [
  ['Student', 'w-[80px] pl-[5px] text-left text-black'], ['Grd', 'w-[44px] text-center text-black'], ['Enrollm...', 'w-[68px] pl-[5px] text-left'],
  ['Age', 'w-[32px] text-center'], ['Teacher', 'w-[98px] pl-[5px] text-left'], ['Lunch ...', 'w-[62px] pl-[5px] text-left'],
  ['S-Id', 'w-[44px] pl-[5px] text-left'],
];

function FamilyCard() {
  return (
    <aside className="absolute top-[149px] left-[900px] flex w-[449px] flex-col rounded-[14px] border-2 border-[#2f3338] bg-[#95a2b4] pr-[7px] pb-[7px] pl-[6px] text-white shadow-[0_0_24px_4px_rgba(0,0,0,0.65)]">
      <div className="flex h-[47px] items-center gap-[3px] pt-[7px] text-[16px] font-bold">
        <Tag label="Tag Bowen, Stacie" checked />
        <span>Bowen, Stacie</span>
        <span className="ml-auto text-[15px]">Active</span>
      </div>
      <div className="flex h-[174px] flex-col border border-[#7b858e] bg-white text-[13px] text-[#333]">
        <table className="w-[429px] table-fixed border-collapse whitespace-nowrap">
          <thead>
            <tr className="h-[23px] bg-linear-to-b from-white to-[#e9ebed]">
              {CARD_HEAD.map(([t, c]) => (
                <th key={t} className={'border-r border-b border-[#dcdee0] p-0 font-normal ' + c}>{t}</th>
              ))}
            </tr>
          </thead>
          <tbody>
            {STUDENTS.map(([name, grade, age, teacher, lunch, sid], i) => (
              <tr key={name} className="h-[23px] odd:h-6 even:bg-[#e1e1e1]">
                <td className="border-r border-[#d4d4d4] p-0 pl-[5px]">
                  <span className="flex items-center">
                    {i === 1 && <Clip />}
                    <a href={'#' + name} className="font-bold text-[#3a9cc4] underline">{name}</a>
                  </span>
                </td>
                <td className="border-r border-[#d4d4d4] p-0 text-center font-bold text-[#3a9cc4]">{grade}</td>
                <td className="border-r border-[#d4d4d4] p-0 pl-[5px]"><EBadge /></td>
                <td className="border-r border-[#d4d4d4] p-0 text-center">{age}</td>
                <td className="border-r border-[#d4d4d4] p-0 pl-[5px]">{teacher}</td>
                <td className="border-r border-[#d4d4d4] p-0 pr-1 text-right underline">{lunch}</td>
                <td className="p-0 pl-[5px]">{sid}</td>
              </tr>
            ))}
          </tbody>
        </table>
        <div className="mt-auto flex h-[22px] items-center bg-[#fcfcfc] px-[7px]">
          <Arrow d={LEFT} />
          <div className="ml-2 h-3 w-[300px] rounded-full bg-[#8a8a8a]" />
          <div className="flex-1" />
          <Arrow d={RIGHT} />
        </div>
      </div>
      <div className="flex gap-1">
        <span className="w-11 pt-1 text-[15px] font-bold whitespace-nowrap">$ 0.00</span>
        {[['Charge', Dollar], ['Add payment', MoneyPlus], ['Card payment', Cards], ['Statement', Ledger]].map(([t, Icon]) => (
          <button key={t} type="button" aria-label={t} className="flex h-[35px] w-[25px] items-center justify-center rounded-[3px] border border-[#767676] bg-[#efefef]">
            <Icon />
          </button>
        ))}
        <label className="ml-auto flex items-start gap-[10px] pt-[10px] text-[14px] leading-5">
          <input type="checkbox" className="size-[13px] appearance-none rounded-[2px] border border-[#767676] bg-white" />
          Inactive
        </label>
      </div>
    </aside>
  );
}

/* ---------- page ---------- */

export default function App() {
  return (
    <div className="flex min-h-screen bg-[linear-gradient(#292a2a_0%,#303133_8%,#3e4042_19%,#4a4c4e_29%,#575757_43%,#585858_48%,#505050_66%,#494949_78%,#4a4a4a_100%)] font-[Roboto,sans-serif]">
      <div className="grid min-w-0 flex-1 grid-cols-[1fr_minmax(0,1123px)_1fr]">
        <h1 className="flex flex-col items-center justify-self-end pt-[57px] pr-2 font-[Liberation_Sans,sans-serif] text-[20px] leading-[22px] font-bold text-white" aria-label="Accounts Receivable">
          {[...'ACCOUNTS RECEIVABLE'].map((ch, i) => (
            <span key={i} className="h-[22px]">{ch}</span>
          ))}
        </h1>
        <main className="relative border-x border-black bg-[repeating-linear-gradient(#ffffff_0_2px,#f3f3f3_2px_4px)]">
          <Header />
          <div className="pt-4 pl-[27px]">
            <Filters />
            <Contracts />
            <GridBar />
            <Accounts />
          </div>
          <button type="button" aria-label="Alerts" className="absolute top-[61px] right-0 flex h-[87px] w-6 items-center justify-center rounded-b-xl border border-[#333] bg-white pb-4 shadow-[0_0_24px_4px_rgba(0,0,0,0.65)]">
            <WarnOut />
          </button>
          <FamilyCard />
        </main>
      </div>
      <div className="flex w-5 flex-col items-center bg-[#fcfcfc] pt-[6px] pb-[5px]">
        <Arrow d={UP} wide />
        <div className="mt-2 mb-11 w-3 flex-1 rounded-full bg-[#8a8a8a]" />
        <Arrow d={DOWN} wide />
      </div>
    </div>
  );
}
